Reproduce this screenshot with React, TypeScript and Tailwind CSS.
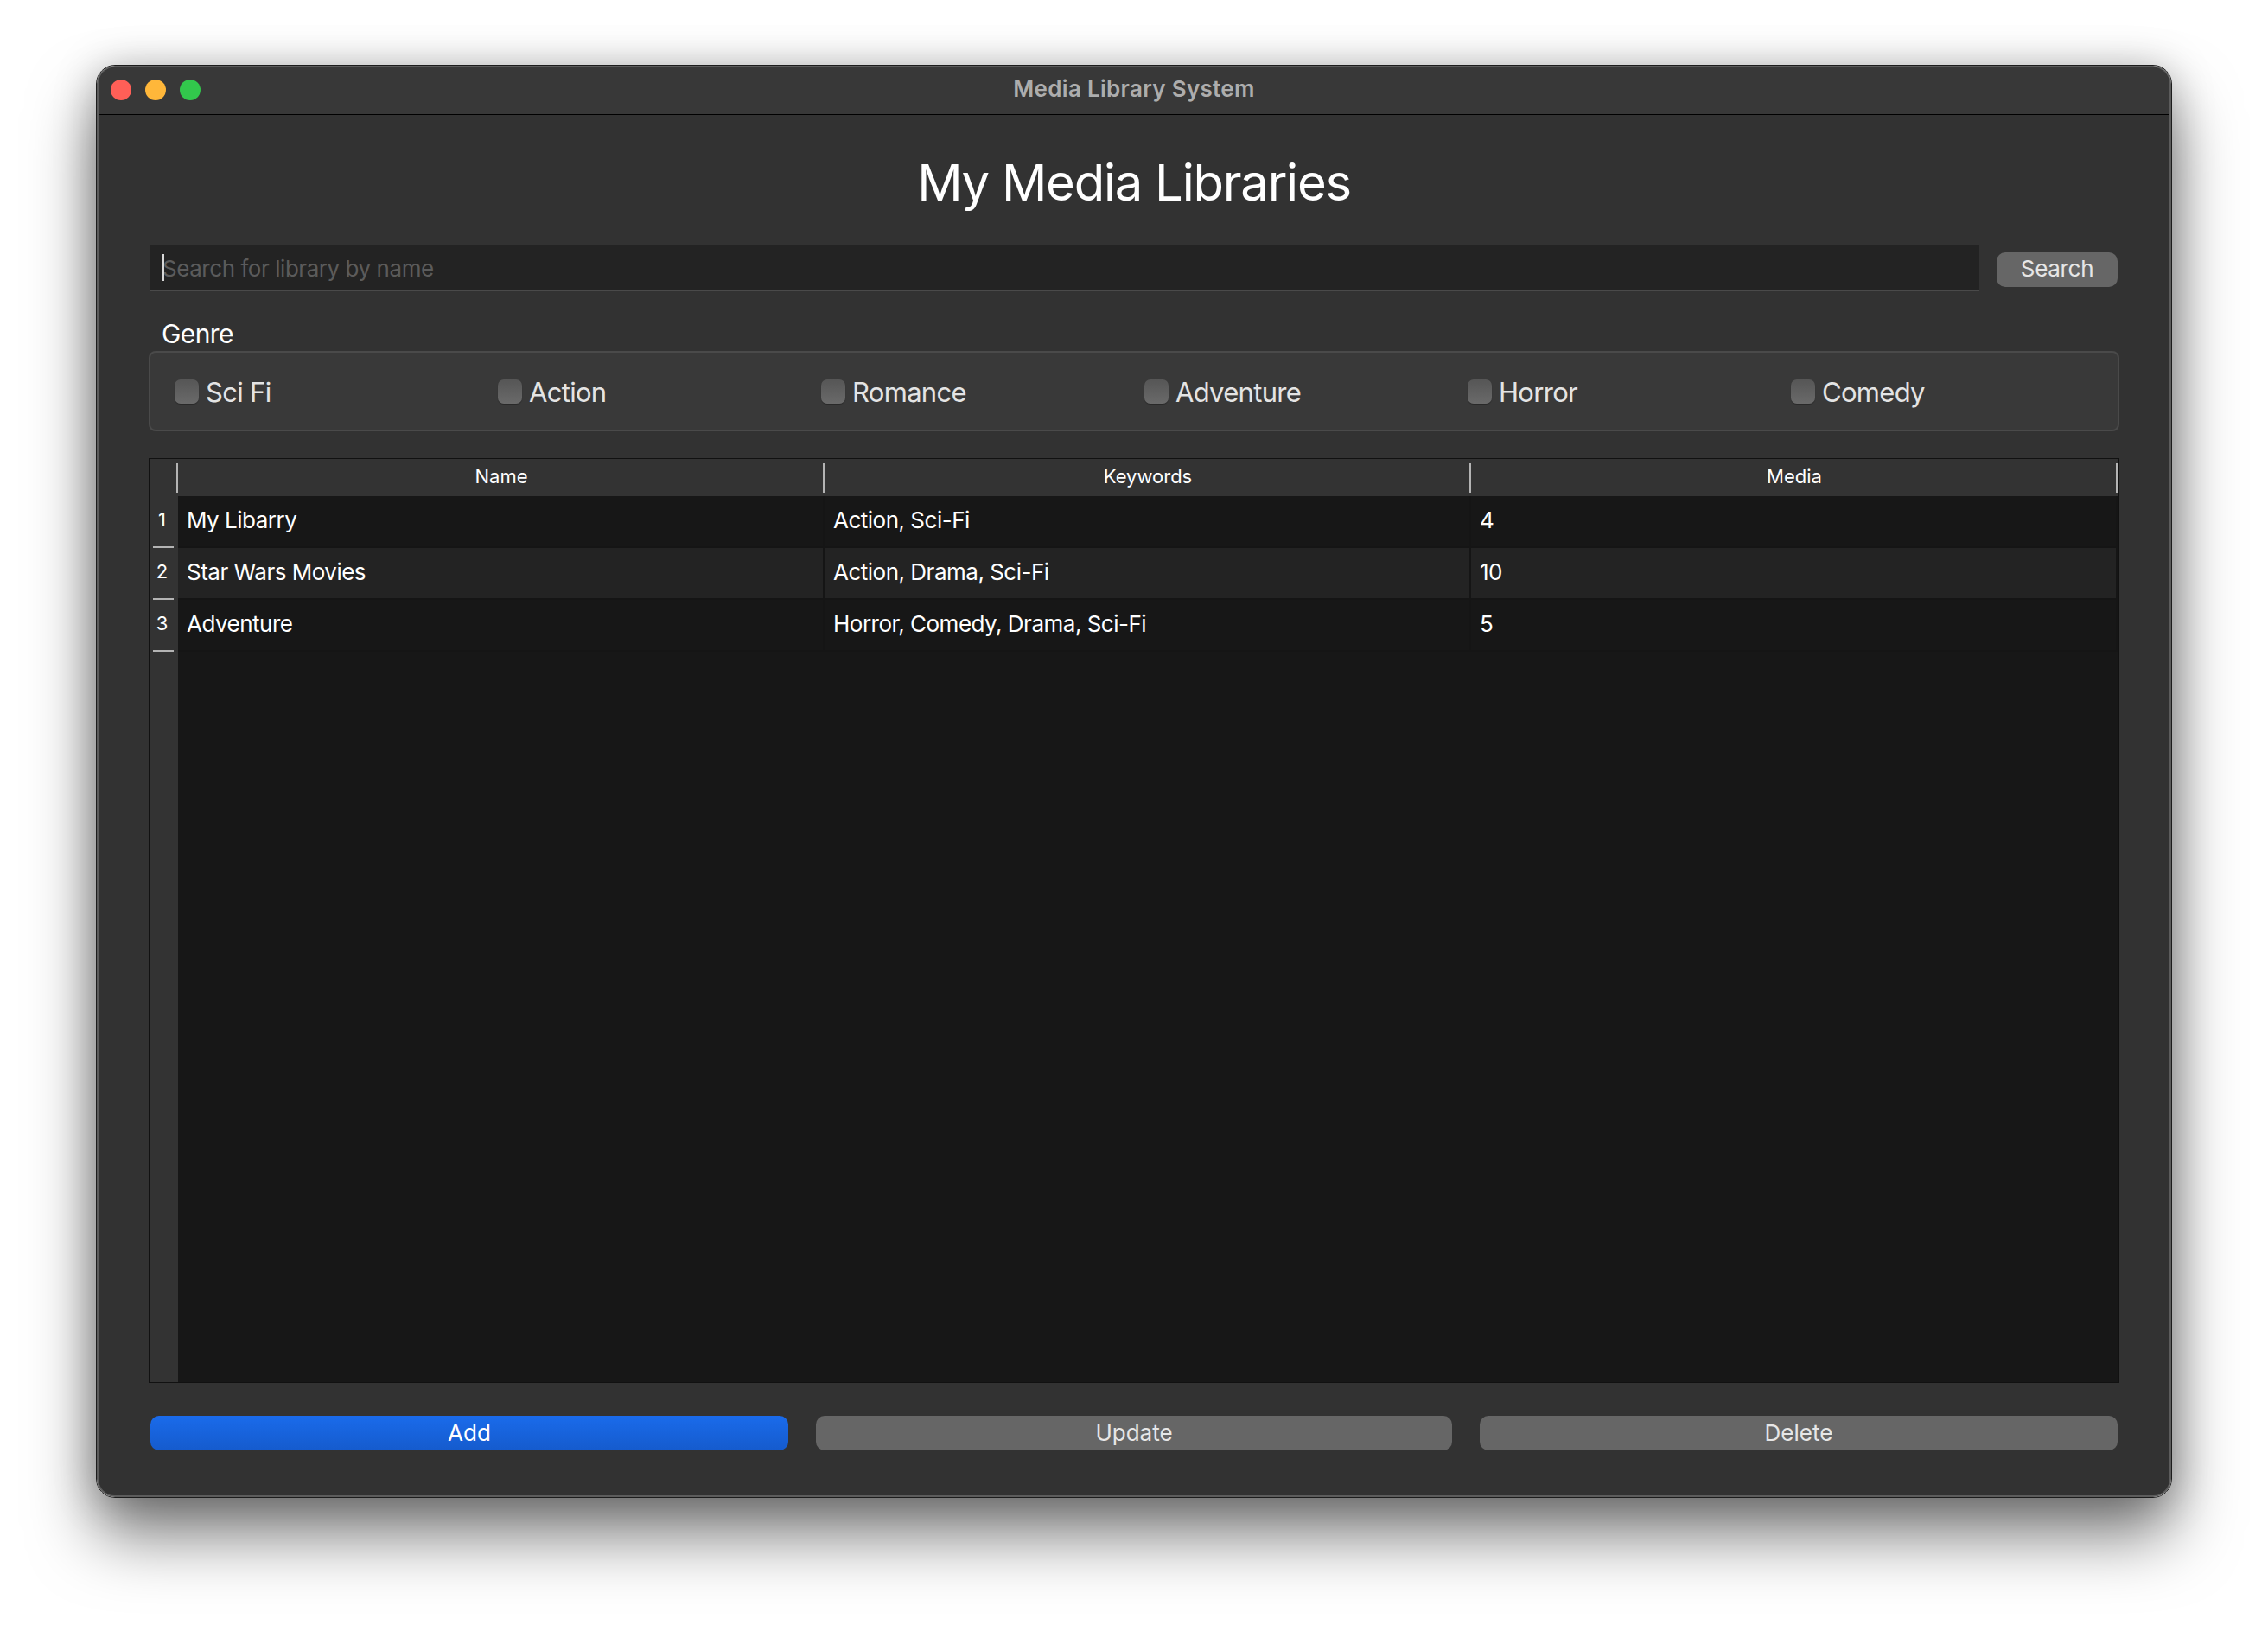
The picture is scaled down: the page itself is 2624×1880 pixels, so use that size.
const genres = ["Sci Fi", "Action", "Romance", "Adventure", "Horror", "Comedy"];
const columns = ["Name", "Keywords", "Media"];
const rows = [
  ["My Libarry", "Action, Sci-Fi", "4"],
  ["Star Wars Movies", "Action, Drama, Sci-Fi", "10"],
  ["Adventure", "Horror, Comedy, Drama, Sci-Fi", "5"],
];

export default function App() {
  return (
    <div className="w-[2624px] h-[1880px] bg-white pt-[75px] pl-[111px] overflow-hidden font-['Inter',sans-serif]">
      <div className="w-[2402px] h-[1658px] rounded-[22px] border border-[#1c1c1c] shadow-[0_44px_76px_rgba(0,0,0,0.5),0_4px_48px_rgba(0,0,0,0.26)]">
        <div className="h-full rounded-[21px] border-2 border-[#5c5c5c] bg-[#323232] overflow-hidden flex flex-col">
          <div className="relative h-[55px] shrink-0 bg-[#383838] border-b border-black flex items-center justify-center">
            <div className="absolute left-[14px] top-[14px] flex gap-[16px]">
              <span className="w-[24px] h-[24px] rounded-full bg-[#ff5f57]" />
              <span className="w-[24px] h-[24px] rounded-full bg-[#ffb73a]" />
              <span className="w-[24px] h-[24px] rounded-full bg-[#32c84c]" />
            </div>
            <span className="text-[26px] font-semibold text-[#adadad] tracking-[0.3px] pb-[5px]">Media Library System</span>
          </div>

          <div className="flex-1 flex flex-col px-[58px]">
            <h1 className="h-[150px] shrink-0 pt-[6px] flex items-center justify-center text-[58px] font-normal tracking-[-1.25px] text-white">My Media Libraries</h1>

            <div className="h-[54px] shrink-0 flex items-start gap-[20px] mx-[2px]">
              <div className="relative flex-1 h-[54px]">
                <input
                  readOnly
                  placeholder="Search for library by name"
                  className="w-full h-full bg-[#232323] border-b-2 border-[#4a4a4a] pl-[14px] pt-[2px] text-[26px] tracking-[-0.45px] text-white placeholder:text-[#5b5b5b] outline-none"
                />
                <span className="absolute left-[14px] top-[11px] w-[2px] h-[31px] bg-[#d8d8d8]" />
              </div>
              <button className="mt-[9px] w-[140px] h-[40px] pb-[3px] rounded-[10px] bg-[#666666] text-[26px] tracking-[-0.3px] text-[#e6e6e6] flex items-center justify-center">Search</button>
            </div>

            <div className="h-[69px] shrink-0 flex items-end pl-[15px] text-[30px] leading-[40px] tracking-[-0.6px] text-white">Genre</div>

            <div className="h-[93px] shrink-0 rounded-[8px] border-2 border-[#4a4a4a] bg-[#393939] pl-[28px] grid grid-cols-[repeat(6,374px)] items-center">
              {genres.map((g) => (
                <label key={g} className="flex items-center gap-[8px]">
                  <span className="w-[28px] h-[28px] rounded-[7px] bg-gradient-to-b from-[#565656] to-[#6a6a6a] shadow-[0_1px_1px_rgba(0,0,0,0.3)]" />
                  <span className="pt-[2px] text-[31px] leading-[40px] tracking-[-0.7px] text-[#e4e4e4]">{g}</span>
                </label>
              ))}
            </div>

            <div className="mt-[31px] h-[1070px] shrink-0 border border-[#111111] flex flex-col">
              <div className="h-[43px] shrink-0 flex items-center bg-[#333333]">
                <div className="w-[33px] h-full flex items-center justify-end">
                  <span className="w-[2px] h-[34px] bg-[#b4b4b4]" />
                </div>
                {columns.map((c) => (
                  <div key={c} className="w-[748px] h-full flex items-center">
                    <span className="flex-1 pl-[2px] pb-[3px] text-center text-[22px] text-white">{c}</span>
                    <span className="w-[2px] h-[34px] bg-[#b4b4b4]" />
                  </div>
                ))}
              </div>

              <div className="flex-1 flex min-h-0">
                <div className="w-[33px] shrink-0 bg-[#333333] flex flex-col">
                  {rows.map((_, i) => (
                    <div key={i} className="h-[60px] flex flex-col">
                      <div className="flex-1 w-[29px] pb-[3px] flex items-center justify-center text-[22px] text-white">{i + 1}</div>
                      <span className="ml-[4px] w-[24px] h-[2px] bg-[#b4b4b4]" />
                    </div>
                  ))}
                </div>
                <div className="flex-1 bg-[#171717] flex flex-col">
                  {rows.map((row, i) => (
                    <div key={i} className="h-[60px] flex border-b-2 border-[#151515]">
                      {row.map((cell, j) => (
                        <div
                          key={j}
                          className={
                            i === 1
                              ? "w-[748px] bg-[#232323] border-r-2 border-[#151515] pl-[10px] pb-[3px] flex items-center text-[26px] tracking-[-0.5px] text-white"
                              : "w-[748px] border-r-2 border-[#151515] pl-[10px] pb-[3px] flex items-center text-[26px] tracking-[-0.5px] text-white"
                          }
                        >
                          {cell}
                        </div>
                      ))}
                    </div>
                  ))}
                </div>
              </div>
            </div>

            <div className="mt-[38px] mx-[2px] grid grid-cols-[738px_736px_738px] gap-[32px]">
              <button className="h-[40px] pb-[3px] rounded-[10px] bg-gradient-to-b from-[#1a6beb] to-[#155bcd] text-[26px] text-white">Add</button>
              <button className="h-[40px] pb-[3px] rounded-[10px] bg-[#666666] text-[26px] text-[#e6e6e6]">Update</button>
              <button className="h-[40px] pb-[3px] rounded-[10px] bg-[#666666] text-[26px] text-[#e6e6e6]">Delete</button>
            </div>
          </div>
        </div>
      </div>
    </div>
  );
}
